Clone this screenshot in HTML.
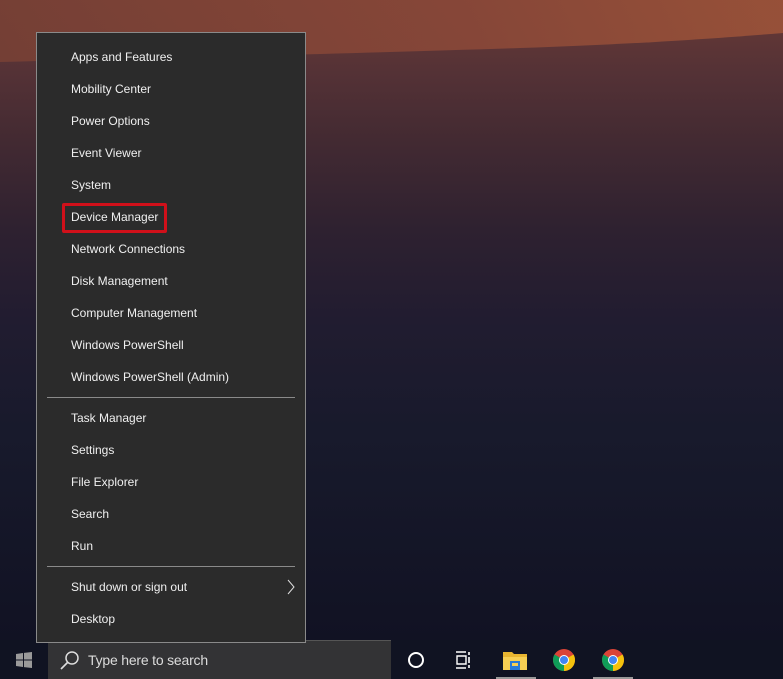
<!DOCTYPE html>
<html><head><meta charset="utf-8"><style>
*{margin:0;padding:0;box-sizing:border-box}
body{width:783px;height:679px;overflow:hidden;position:relative;font-family:"Liberation Sans",sans-serif;
background:linear-gradient(180deg,#6a3a36 0px,#553236 70px,#432a32 140px,#2e2130 230px,#211c30 320px,#181a2c 430px,#111223 640px);}
#sky{position:absolute;left:0;top:0;width:783px;height:90px}
.menu{position:absolute;left:36px;top:32px;width:270px;height:611px;background:#2b2b2b;border:1px solid #8a8a8a;z-index:5}
.it{position:absolute;left:34px;color:#f0f0f0;font-size:12px;line-height:16px}
.sep{position:absolute;left:10px;width:248px;height:1px;background:#8a8a8a}
.red{position:absolute;left:25px;top:170px;width:105px;height:30px;border:3px solid #d0101a;border-radius:2px}
.tb{position:absolute;left:0;top:640px;width:783px;height:39px;background:#101322}
.sb{position:absolute;left:48px;top:640px;width:343px;height:39px;background:#333335;border-top:1px solid #555;}
</style></head><body>
<svg id="sky" viewBox="0 0 783 90" preserveAspectRatio="none">
<defs><linearGradient id="g" x1="0" y1="0" x2="1" y2="0"><stop offset="0" stop-color="#774035"/><stop offset="0.6" stop-color="#8a4838"/><stop offset="1" stop-color="#9c5339"/></linearGradient>
<linearGradient id="f" x1="0" y1="0" x2="0" y2="1"><stop offset="0" stop-color="#000" stop-opacity="0"/><stop offset="1" stop-color="#000" stop-opacity="0"/></linearGradient></defs>
<path d="M0 0H783V33C720 38 640 44 520 48C400 52 250 56 0 62Z" fill="url(#g)" opacity="0.9"/>
</svg>
<div class="menu">
<div class="it" style="top:16px">Apps and Features</div>
<div class="it" style="top:48px">Mobility Center</div>
<div class="it" style="top:80px">Power Options</div>
<div class="it" style="top:112px">Event Viewer</div>
<div class="it" style="top:144px">System</div>
<div class="it" style="top:176px">Device Manager</div>
<div class="it" style="top:208px">Network Connections</div>
<div class="it" style="top:240px">Disk Management</div>
<div class="it" style="top:272px">Computer Management</div>
<div class="it" style="top:304px">Windows PowerShell</div>
<div class="it" style="top:336px">Windows PowerShell (Admin)</div>
<div class="sep" style="top:364px"></div>
<div class="it" style="top:377px">Task Manager</div>
<div class="it" style="top:409px">Settings</div>
<div class="it" style="top:441px">File Explorer</div>
<div class="it" style="top:473px">Search</div>
<div class="it" style="top:505px">Run</div>
<div class="sep" style="top:533px"></div>
<div class="it" style="top:546px">Shut down or sign out</div>
<svg style="position:absolute;left:250px;top:546px" width="8" height="16"><path d="M1 1L7 8L1 15" stroke="#ddd" fill="none" stroke-width="1"/></svg>
<div class="it" style="top:578px">Desktop</div>
<div class="red"></div>
</div>
<div class="tb"></div>
<svg style="position:absolute;left:16px;top:652px" width="16" height="16"><path d="M0 2L7 1V7.5H0ZM8 0.9L16 0V7.5H8ZM0 8.5H7V15L0 14ZM8 8.5H16V16L8 15.1Z" fill="#9a9a9a"/></svg>
<div class="sb"></div>
<svg style="position:absolute;left:60px;top:650px" width="20" height="20"><circle cx="12" cy="8" r="6" stroke="#ddd" stroke-width="1.5" fill="none"/><path d="M8 12L1 19" stroke="#ddd" stroke-width="1.7"/></svg>
<div style="position:absolute;left:88px;top:652px;color:#dcdcdc;font-size:14px;letter-spacing:-0.2px">Type here to search</div>
<div style="position:absolute;left:408px;top:652px;width:16px;height:16px;border:2px solid #fff;border-radius:50%"></div>
<svg style="position:absolute;left:455px;top:651px" width="18" height="18"><path d="M1 1H11M1 17H11M2 5H11V13H2Z" stroke="#fff" stroke-width="1.4" fill="none"/><path d="M14 1V4M14 6V12M14 14V17" stroke="#fff" stroke-width="1.6"/></svg>
<svg style="position:absolute;left:503px;top:650px" width="24" height="20"><path d="M0 2H9L11 4H24V20H0Z" fill="#e8b530"/><path d="M0 7H24V20H0Z" fill="#f7cf53"/><rect x="7" y="11" width="10" height="9" fill="#2a7bd6"/><rect x="9" y="13" width="6" height="3" fill="#f7cf53"/></svg>
<div style="position:absolute;left:496px;top:677px;width:40px;height:2px;background:#999"></div>
<svg style="position:absolute;left:552px;top:648px" width="24" height="24" viewBox="0 0 24 24"><circle cx="12" cy="12" r="11" fill="#db4437"/><path d="M12 12L2.5 6.5A11 11 0 0 0 12 23Z" fill="#0f9d58"/><path d="M12 12L12 23A11 11 0 0 0 21.5 6.5Z" fill="#f4c20d"/><circle cx="12" cy="12" r="5" fill="#fff"/><circle cx="12" cy="12" r="4" fill="#4285f4"/></svg>
<svg style="position:absolute;left:601px;top:648px" width="24" height="24" viewBox="0 0 24 24"><circle cx="12" cy="12" r="11" fill="#db4437"/><path d="M12 12L2.5 6.5A11 11 0 0 0 12 23Z" fill="#0f9d58"/><path d="M12 12L12 23A11 11 0 0 0 21.5 6.5Z" fill="#f4c20d"/><circle cx="12" cy="12" r="5" fill="#fff"/><circle cx="12" cy="12" r="4" fill="#4285f4"/></svg>
<div style="position:absolute;left:593px;top:677px;width:40px;height:2px;background:#999"></div>
</body></html>
